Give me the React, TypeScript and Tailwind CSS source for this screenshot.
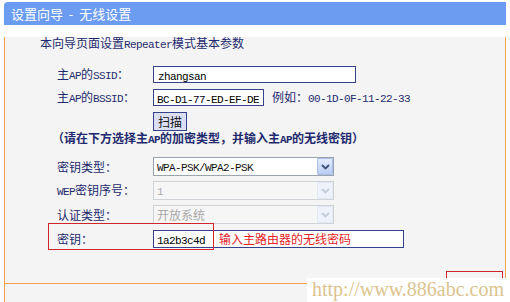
import React from "react";

function T({ s, className }: { s: string; className?: string }) {
  const parts = s.split(/([\x21-\x7e]+)/).filter(Boolean);
  return (
    <span className={className}>
      {parts.map((p, i) =>
        /^[\x21-\x7e]+$/.test(p) ? (
          <span key={i} className="font-['Liberation_Mono',monospace] text-[11px] tracking-[-0.6px]">
            {p}
          </span>
        ) : (
          <span key={i}>{p}</span>
        )
      )}
    </span>
  );
}

function Chevron({ color }: { color: string }) {
  return (
    <svg width="9" height="6" viewBox="0 0 9 6">
      <path d="M1 1 L4.5 4.5 L8 1" fill="none" stroke={color} strokeWidth="1.8" />
    </svg>
  );
}

function Select({ value, disabled }: { value: string; disabled?: boolean }) {
  return (
    <div
      className={
        "w-[181px] h-[19px] flex items-center border " +
        (disabled ? "border-[#cfd3d8] bg-[#f6f6f6] text-[#a8a8a8]" : "border-[#9aa3b0] bg-white text-[#111]")
      }
    >
      <div className="flex-1 pl-[3px] leading-[17px]">
        <T s={value} />
      </div>
      <div
        className={
          "w-[16px] h-[17px] flex items-center justify-center border rounded-[1px] " +
          (disabled
            ? "border-[#e2e8f2] bg-[#eef3fb]"
            : "border-[#a9bde6] bg-gradient-to-b from-[#e4ecfd] to-[#b9cdf3]")
        }
      >
        <Chevron color={disabled ? "#c2cddf" : "#3c4f78"} />
      </div>
    </div>
  );
}

export default function App() {
  const navy = "text-[#1f2a6e]";
  return (
    <div className="relative w-[510px] h-[302px] bg-white overflow-hidden font-['Noto_Sans_CJK_SC',sans-serif] text-[12px]">
      {/* header */}
      <div className="ml-[4px] mt-[2px] w-[502px] h-[23px] bg-[#6b9cf2] rounded-tl-[4px] pl-[7px] text-white text-[13px] leading-[23px] whitespace-pre">
        设置向导  -  无线设置
      </div>
      {/* panel */}
      <div className="ml-[4px] mt-[1px] w-[502px] h-[247px] bg-[#f4f4f4] border-l border-r border-b border-[#f0a050]">
        <div className={"pl-[35px] mt-[12px] h-[12px] leading-[12px] " + navy}>
          <T s="本向导页面设置Repeater模式基本参数" />
        </div>

        <div className="flex items-center pl-[52px] mt-[17px] h-[17px]">
          <div className={"w-[96px] leading-[12px] " + navy}>
            <T s="主AP的SSID：" />
          </div>
          <div className="w-[203px] h-[17px] border border-[#34438c] bg-white pl-[4px] leading-[15px] text-black">
            <T s="zhangsan" />
          </div>
        </div>

        <div className="flex items-center pl-[52px] mt-[6px] h-[17px]">
          <div className={"w-[96px] leading-[12px] " + navy}>
            <T s="主AP的BSSID：" />
          </div>
          <div className="w-[111px] h-[17px] border border-[#34438c] bg-white pl-[3px] leading-[15px] text-black overflow-hidden whitespace-nowrap">
            <T s="BC-D1-77-ED-EF-DE" />
          </div>
          <div className={"ml-[8px] leading-[12px] " + navy}>
            <T s="例如：00-1D-0F-11-22-33" />
          </div>
        </div>

        <div className="flex pl-[148px] mt-[6px] h-[19px]">
          <div className="w-[34px] h-[19px] border border-[#34438c] bg-[#dcdff4] flex items-center justify-center text-[#111] leading-[12px]">
            扫描
          </div>
        </div>

        <div className={"pl-[47px] mt-[0px] h-[13px] leading-[13px] font-semibold whitespace-nowrap " + navy}>
          <T s="（请在下方选择主AP的加密类型，并输入主AP的无线密钥）" />
        </div>

        <div className="flex items-center pl-[52px] mt-[13px] h-[19px]">
          <div className={"w-[96px] leading-[12px] " + navy}>
            <T s="密钥类型：" />
          </div>
          <Select value="WPA-PSK/WPA2-PSK" />
        </div>

        <div className="flex items-center pl-[52px] mt-[5px] h-[19px]">
          <div className={"w-[96px] leading-[12px] " + navy}>
            <T s="WEP密钥序号：" />
          </div>
          <Select value="1" disabled />
        </div>

        <div className="flex items-center pl-[52px] mt-[5px] h-[19px]">
          <div className={"w-[96px] leading-[12px] " + navy}>
            <T s="认证类型：" />
          </div>
          <Select value="开放系统" disabled />
        </div>

        <div className="relative flex items-center pl-[52px] mt-[6px] h-[18px]">
          <div className={"w-[96px] leading-[12px] " + navy}>
            <T s="密钥：" />
          </div>
          <div className="w-[61px] h-[18px] border border-[#34438c] bg-white pl-[3px] leading-[16px] text-black">
            <T s="1a2b3c4d" />
          </div>
          <div className="w-[190px] h-[18px] border border-l-0 border-[#34438c] bg-white pl-[5px] leading-[16px] text-[#e2231f]">
            输入主路由器的无线密码
          </div>
          <div className="absolute left-[43px] top-[-7px] w-[166px] h-[27px] border border-[#d0262b] pointer-events-none" />
        </div>
      </div>
      {/* bottom bar */}
      <div className="ml-[4px] w-[502px] h-[26px] border-l border-b border-[#f0a050] bg-[#f4f4f4] flex gap-[12px] pl-[379px] pt-[3px]">
        <div className="w-[52px] h-[20px] border border-[#34438c] bg-[#eef0fa]" />
        <div className="w-[52px] h-[20px] border border-[#34438c] bg-[#eef0fa]" />
      </div>
      {/* highlight around next button */}
      <div className="absolute left-[446px] top-[271px] w-[57px] h-[28px] border border-[#d0262b]" />
      {/* watermark */}
      <div className="absolute left-[307px] top-[278px] w-[203px] h-[24px] bg-white pl-[5px] font-['Liberation_Serif',serif] text-[20px] leading-[22px] text-[#dcc48e]">
        http://www.886abc.com
      </div>
    </div>
  );
}
